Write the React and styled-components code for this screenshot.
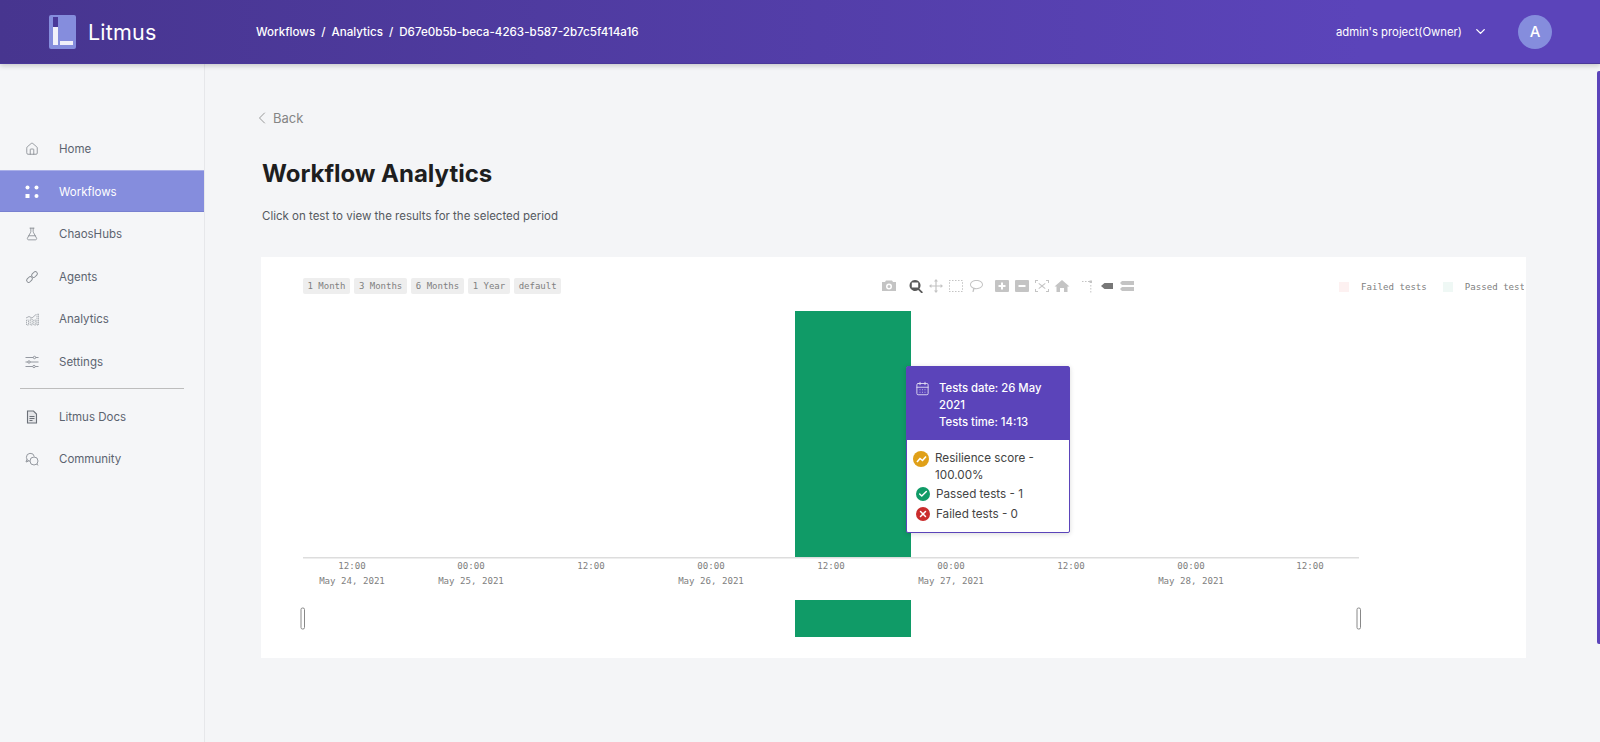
import React from 'react'
import styled, { createGlobalStyle } from 'styled-components'
import { Home, FlaskConical, ChevronLeft, ChevronDown, CalendarDays, Check, X } from 'lucide-react'

const GlobalStyle = createGlobalStyle`
  html, body { margin: 0; padding: 0; height: 100%; overflow: hidden; }
  body { font-family: Inter, "Noto Sans", sans-serif; background: #F4F5F7; }
`

const Page = styled.div`
  position: relative;
  height: 100vh;
  display: flex;
  flex-direction: column;
  overflow: hidden;
`
const Header = styled.header`
  position: relative;
  z-index: 2;
  flex: 0 0 63px;
  display: flex;
  align-items: center;
  background: linear-gradient(90deg, #47358F 0%, #5B44BA 85%);
  border-bottom: 1px solid #4A3899;
  box-shadow: 0 2px 5px rgba(0, 0, 0, 0.18);
  color: #fff;
`
const Brand = styled.div`
  display: flex;
  align-items: center;
  gap: 12px;
  width: 256px;
  padding-left: 49px;
  box-sizing: border-box;
  font-size: 21.5px;
  letter-spacing: 0.2px;
`
const Crumbs = styled.div`
  font-size: 11.6px;
  font-weight: 500;
`
const Sep = styled.span`
  margin: 0 6px;
`
const Project = styled.div`
  margin-left: auto;
  display: flex;
  align-items: center;
  font-size: 11.3px;
`
const Chevron = styled(ChevronDown)`
  margin-left: 11px;
`
const Avatar = styled.div`
  width: 34px;
  height: 34px;
  margin: 0 48px 0 30px;
  border-radius: 50%;
  background: #858DDD;
  display: flex;
  align-items: center;
  justify-content: center;
  font-size: 15px;
  font-weight: 500;
`
const Body = styled.div`
  flex: 1;
  display: flex;
  min-height: 0;
`
const Sidebar = styled.nav`
  flex: 0 0 204px;
  padding-top: 63px;
  background: #F5F6F8;
  border-right: 1px solid #E6E7EA;
`
const NavItem = styled.div`
  height: 42.6px;
  box-sizing: border-box;
  padding: 1.5px 0 0 25px;
  display: flex;
  align-items: center;
  gap: 20px;
  font-size: 11.5px;
  color: ${p => (p.$active ? '#fff' : '#5C6470')};
  background: ${p => (p.$active ? '#858DDD' : 'transparent')};
  box-shadow: ${p => (p.$active ? 'inset 0 1px 0 #A9AFE8, inset 0 -1px 0 #7880D0' : 'none')};
  svg { flex: 0 0 14px; }
`
const NavRule = styled.hr`
  margin: 5px 20px 6px;
  border: 0;
  border-top: 1.5px solid #BDBDBD;
  width: 164px;
`
const Main = styled.main`
  flex: 1;
  padding: 0 74px 0 56px;
  min-width: 0;
`
const Back = styled.div`
  display: flex;
  align-items: center;
  margin: 44px 0 0 -9px;
  gap: 1px;
  font-size: 13px;
  color: #858585;
  height: 20px;
`
const Title = styled.h1`
  margin: 31px 0 0 1px;
  font-size: 24px;
  line-height: 30px;
  font-weight: 700;
  color: #1E1E1E;
`
const Subtitle = styled.p`
  margin: 19px 0 0 1px;
  font-size: 11.5px;
  line-height: 16px;
  color: #55595F;
`
const Card = styled.section`
  position: relative;
  margin-top: 33px;
  height: 401px;
  box-sizing: border-box;
  padding: 21px 0 0 42px;
  background: #fff;
  overflow: hidden;
`
const Toolbar = styled.div`
  display: flex;
  align-items: center;
  height: 16px;
`
const RangeButtons = styled.div`
  display: flex;
  gap: 4.5px;
`
const RangeButton = styled.span`
  padding: 0 4.5px;
  height: 16px;
  border-radius: 2px;
  background: #EEEEEE;
  font: 9px/16px "DejaVu Sans Mono", monospace;
  color: #808080;
`
const ModeBar = styled.div`
  display: flex;
  gap: 6.5px;
  margin-left: 318px;
`
const ModeGroup = styled.div`
  display: flex;
`
const ModeIcon = styled.svg`
  width: 20px;
  height: 14px;
  fill: ${p => p.$fill || '#C4C4C4'};
`
const Legend = styled.div`
  display: flex;
  align-items: center;
  flex: 0 0 185px;
  overflow: hidden;
  margin: 2px 0 0 200.5px;
  font: 9.1px/16px "DejaVu Sans Mono", monospace;
  color: #808080;
  white-space: nowrap;
`
const Swatch = styled.i`
  flex: 0 0 10px;
  height: 10px;
  margin: 0 12px 0 ${p => p.$gap}px;
  background: ${p => p.$color};
`
const Plot = styled.svg`
  display: block;
  margin: 6px 0 0 -7px;
  text {
    font: 9.1px "DejaVu Sans Mono", monospace;
    fill: #808080;
    text-anchor: middle;
  }
`
const Tooltip = styled.div`
  position: absolute;
  left: 645px;
  top: 109px;
  width: 164px;
  height: 167px;
  box-sizing: border-box;
  background: #fff;
  border: 1px solid #5B44BA;
  border-radius: 2px;
  box-shadow: 0 1px 5px rgba(0, 0, 0, 0.15);
  font-size: 11.7px;
  line-height: 17px;
`
const TipHead = styled.div`
  display: flex;
  gap: 9px;
  height: 73px;
  box-sizing: border-box;
  padding: 13px 8px 0 8px;
  background: #5B44BA;
  color: #fff;
  font-size: 11.3px;
  font-weight: 500;
  svg { margin-top: 1px; flex: 0 0 15px; opacity: 0.85; }
`
const TipBody = styled.div`
  padding: 10px 6px 0;
  color: #444;
`
const TipRow = styled.div`
  display: flex;
  gap: 6px;
  margin-bottom: ${p => (p.$inset ? 3 : 2)}px;
  padding-left: ${p => (p.$inset ? 3 : 0)}px;
`
const Dot = styled.span`
  flex: 0 0 ${p => (p.$big ? 16 : 14)}px;
  height: ${p => (p.$big ? 16 : 14)}px;
  margin-top: 1px;
  border-radius: 50%;
  background: ${p => p.$color};
  display: flex;
  align-items: center;
  justify-content: center;
  color: #fff;
`
const Scrollbar = styled.div`
  position: absolute;
  right: 0;
  top: 71px;
  bottom: 98px;
  width: 3px;
  border-radius: 2px 0 0 2px;
  background: #5B44BA;
`

const LitmusLogo = () => (
  <svg width="27" height="34" viewBox="0 0 27 34">
    <rect width="27" height="34" rx="2" fill="#858DDD" />
    <rect x="4" y="2" width="5" height="10" fill="#4A3899" />
    <rect x="4" y="12" width="5" height="18" fill="#F1F1FA" />
    <rect x="11" y="26" width="13" height="4" fill="#F1F1FA" />
  </svg>
)

const WorkflowDots = () => (
  <svg width="14" height="14" viewBox="0 0 14 14" fill="#fff">
    <circle cx="2.5" cy="2.5" r="2" />
    <circle cx="11.5" cy="2.5" r="2" />
    <rect x="0.5" y="9" width="4" height="4" />
    <circle cx="11.5" cy="11" r="2" />
  </svg>
)

const AgentsLink = () => (
  <svg width="14" height="14" viewBox="0 0 14 14" fill="none" stroke="#8A8F96" strokeWidth="1">
    <rect x="-3.2" y="-2" width="6.4" height="4" rx="2" transform="translate(4.5 9.5) rotate(-45)" />
    <rect x="-3.2" y="-2" width="6.4" height="4" rx="2" transform="translate(9.5 4.5) rotate(-45)" />
  </svg>
)

const AnalyticsBars = () => (
  <svg width="14" height="14" viewBox="0 0 14 14" fill="none" stroke="#A4A8AE" strokeWidth="0.9" strokeDasharray="1.4 0.6">
    <path d="M1.5 13V8h2v5zM5.2 13V7h2v6zM8.8 13V8h2v5zM12 13V2h1.5v11z" />
    <path d="M1 6l3-1.5L7 6l4-3.5" strokeDasharray="none" />
  </svg>
)

const SettingsSliders = () => (
  <svg width="14" height="14" viewBox="0 0 14 14" fill="#F5F6F8" stroke="#8A8F96" strokeWidth="0.9">
    <path d="M0.5 2.5h13M0.5 7h13M0.5 11.5h13" />
    <circle cx="9.5" cy="2.5" r="1.2" />
    <circle cx="4" cy="7" r="1.2" />
    <circle cx="9" cy="11.5" r="1.2" />
  </svg>
)

const DocsIcon = () => (
  <svg width="14" height="14" viewBox="0 0 14 14" fill="none" stroke="#6B7078" strokeWidth="1.1">
    <path d="M2.5 1h6l3 3v9h-9z" fill="#E4E5E8" />
    <path d="M4.5 6.5h5M4.5 8.5h5M4.5 10.5h3" strokeWidth="1" />
  </svg>
)

const CommunityIcon = () => (
  <svg width="14" height="14" viewBox="0 0 14 14" fill="#F5F6F8" stroke="#8A8F96" strokeWidth="0.9">
    <path d="M5 9.3A4 4 0 1 1 9.3 4.5" />
    <path d="M1.8 7.5L1 10l2.5-.8" fill="none" />
    <circle cx="9" cy="9" r="4" />
    <path d="M12 12l1 1.5" fill="none" />
  </svg>
)

const modeIcons = [
  [
    { d: 'M3 3h3l1-1.5h6L14 3h3v9H3zM10 4.5a3 3 0 1 0 0 6 3 3 0 0 0 0-6zm0 1.5a1.5 1.5 0 1 1 0 3 1.5 1.5 0 0 1 0-3z' },
  ],
  [
    { d: 'M9 1a5.5 5.5 0 0 1 4.4 8.8l3.6 3.4-1.3 1.3-3.5-3.5A5.5 5.5 0 1 1 9 1zM5.8 3.4v5.2h6.4V3.4z', fill: '#5A5A5A' },
    { d: 'M10 0l2 2.5h-1.4v4h4V5L17 7l-2.4 2V7.6h-4v4H12L10 14l-2-2.4h1.4v-4h-4V9L3 7l2.4-2v1.4h4v-4H8z' },
    { d: 'M3 1h1.5v1H3zm3 0h1.5v1H6zm3 0h1.5v1H9zm3 0h1.5v1H12zm3 0h1.5v1H15zM3 12h1.5v1H3zm3 0h1.5v1H6zm3 0h1.5v1H9zm3 0h1.5v1H12zm3 0h1.5v1H15zM3 3.3h1v1.5H3zm0 3h1v1.5H3zm0 3h1v1.5H3zm13-6h1v1.5h-1zm0 3h1v1.5h-1zm0 3h1v1.5h-1z' },
    { d: 'M10.5 1C14 1 17 3 17 5.6s-3 4.6-6.5 4.6c-.8 0-1.4-.1-2-.2L7.6 13H6.4l.7-3.4C5 8.8 4 7.3 4 5.6 4 3 7 1 10.5 1zm0 1C7.5 2 5 3.6 5 5.6s2.5 3.6 5.5 3.6 5.5-1.6 5.5-3.6S13.5 2 10.5 2z' },
  ],
  [
    { d: 'M4 1h12a1 1 0 0 1 1 1v10a1 1 0 0 1-1 1H4a1 1 0 0 1-1-1V2a1 1 0 0 1 1-1zm5 2.5V6H6.5v2H9v2.5h2V8h2.5V6H11V3.5z' },
    { d: 'M4 1h12a1 1 0 0 1 1 1v10a1 1 0 0 1-1 1H4a1 1 0 0 1-1-1V2a1 1 0 0 1 1-1zm2.5 5v2h7V6z' },
    { d: 'M3 1h3v1H4v2H3zm11 0h3v3h-1V2h-2zM3 10h1v2h2v1H3zm13 0h1v3h-3v-1h2zM7 4l3 2.3L13 4l.6.7L10.8 7l2.800 2.300-.6.7-3-2.300L7 10l-.6-.7L9.200 7 6.400 4.700z' },
    { d: 'M10 1l7.500 6.500H15.500V13H12V9H8v4H4.500V7.500H2.500z' },
  ],
  [
    { d: 'M3 2h1.500v1H3zm3 0h1.500v1H6zm3 0h2.600v1H9zM10.600 1.500h2.400v2.400h-2.400zM11.300 6h1v1.600h-1zm0 3h1v1.600h-1zm0 3h1v1.500h-1z' },
    { d: 'M2 7l3.500-3H14v6H5.500z', fill: '#777' },
    { d: 'M3 2h12v4H3L1 4zM3 8h12v4H3l-2-2z' },
  ],
]

const ticks = [
  { x: 56, time: '12:00', date: 'May 24, 2021' },
  { x: 175, time: '00:00', date: 'May 25, 2021' },
  { x: 295, time: '12:00' },
  { x: 415, time: '00:00', date: 'May 26, 2021' },
  { x: 535, time: '12:00' },
  { x: 655, time: '00:00', date: 'May 27, 2021' },
  { x: 775, time: '12:00' },
  { x: 895, time: '00:00', date: 'May 28, 2021' },
  { x: 1014, time: '12:00' },
]

const Handle = ({ x }) => (
  <rect x={x} y="308" width="3.5" height="21" rx="1.5" fill="#fff" stroke="#888" />
)

const navTop = [
  { label: 'Home', icon: <Home size={14} strokeWidth={1.3} color="#7C8188" /> },
  { label: 'Workflows', icon: <WorkflowDots />, active: true },
  { label: 'ChaosHubs', icon: <FlaskConical size={14} strokeWidth={1.3} color="#7C8188" /> },
  { label: 'Agents', icon: <AgentsLink /> },
  { label: 'Analytics', icon: <AnalyticsBars /> },
  { label: 'Settings', icon: <SettingsSliders /> },
]
const navBottom = [
  { label: 'Litmus Docs', icon: <DocsIcon /> },
  { label: 'Community', icon: <CommunityIcon /> },
]

const renderNav = items => items.map(item => (
  <NavItem key={item.label} $active={item.active}>
    {item.icon}
    {item.label}
  </NavItem>
))

export default function App() {
  return (
    <Page>
      <GlobalStyle />
      <Header>
        <Brand>
          <LitmusLogo />
          Litmus
        </Brand>
        <Crumbs>
          Workflows<Sep>/</Sep>Analytics<Sep>/</Sep>D67e0b5b-beca-4263-b587-2b7c5f414a16
        </Crumbs>
        <Project>
          admin's project(Owner)
          <Chevron size={15} strokeWidth={2.2} />
          <Avatar>A</Avatar>
        </Project>
      </Header>
      <Body>
        <Sidebar>
          {renderNav(navTop)}
          <NavRule />
          {renderNav(navBottom)}
        </Sidebar>
        <Main>
          <Back>
            <ChevronLeft size={20} strokeWidth={1} />
            Back
          </Back>
          <Title>Workflow Analytics</Title>
          <Subtitle>Click on test to view the results for the selected period</Subtitle>
          <Card>
            <Toolbar>
              <RangeButtons>
                {['1 Month', '3 Months', '6 Months', '1 Year', 'default'].map(label => (
                  <RangeButton key={label}>{label}</RangeButton>
                ))}
              </RangeButtons>
              <ModeBar>
                {modeIcons.map((group, i) => (
                  <ModeGroup key={i}>
                    {group.map(icon => (
                      <ModeIcon key={icon.d} viewBox="0 0 20 14" $fill={icon.fill}>
                        <path d={icon.d} />
                      </ModeIcon>
                    ))}
                  </ModeGroup>
                ))}
              </ModeBar>
              <Legend>
                <Swatch $gap={0} $color="#FDF1F1" />
                Failed tests
                <Swatch $gap={16} $color="#EFF8F5" />
                Passed tests
              </Legend>
            </Toolbar>
            <Plot width="1070" height="340" viewBox="0 0 1070 340">
              <rect x="499" y="11" width="116" height="246" fill="#109B67" />
              <rect x="7" y="257" width="1056" height="1.5" fill="#DDDDDD" />
              {ticks.map(t => (
                <g key={t.x}>
                  <text x={t.x} y="269">{t.time}</text>
                  {t.date && <text x={t.x} y="284">{t.date}</text>}
                </g>
              ))}
              <rect x="499" y="300" width="116" height="37" fill="#109B67" />
              <Handle x={5} />
              <Handle x={1061} />
            </Plot>
            <Tooltip>
              <TipHead>
                <CalendarDays size={15} strokeWidth={1.4} />
                <div>
                  Tests date: 26 May 2021
                  <br />
                  Tests time: 14:13
                </div>
              </TipHead>
              <TipBody>
                <TipRow>
                  <Dot $big $color="#E0A018">
                    <svg width="11" height="11" viewBox="0 0 11 11" fill="none" stroke="#fff" strokeWidth="1.6">
                      <path d="M1 8l3-3.5 2.5 2L10 2.5" />
                    </svg>
                  </Dot>
                  <span>Resilience score - 100.00%</span>
                </TipRow>
                <TipRow $inset>
                  <Dot $color="#109B67"><Check size={10} strokeWidth={3.5} /></Dot>
                  <span>Passed tests - 1</span>
                </TipRow>
                <TipRow $inset>
                  <Dot $color="#CA2C2C"><X size={10} strokeWidth={3.5} /></Dot>
                  <span>Failed tests - 0</span>
                </TipRow>
              </TipBody>
            </Tooltip>
          </Card>
        </Main>
      </Body>
      <Scrollbar />
    </Page>
  )
}
